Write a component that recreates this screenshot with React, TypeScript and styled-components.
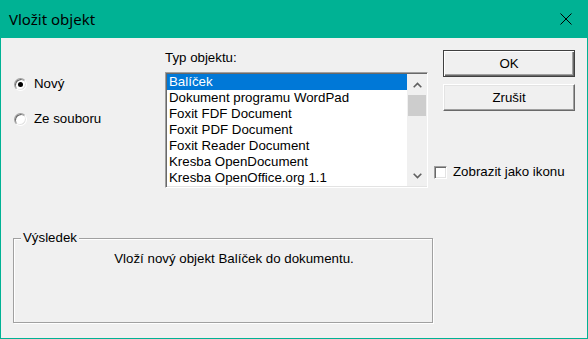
import React from "react";
import styled, { createGlobalStyle } from "styled-components";

const Global = createGlobalStyle`
  html, body { margin: 0; padding: 0; background: #f0f0f0; }
  * { box-sizing: border-box; }
`;

const Window = styled.div`
  width: 588px;
  height: 339px;
  border: 1px solid #00b294;
  border-top: none;
  background: #f0f0f0;
  display: flex;
  flex-direction: column;
  font-family: "Liberation Sans", Arial, sans-serif;
  font-size: 13.3px;
  line-height: 16px;
  color: #000;
`;

const TitleBar = styled.div`
  height: 38px;
  margin: 0 -1px;
  background: #00b294;
  display: flex;
  align-items: center;
  justify-content: space-between;
  padding-left: 9px;
  font-family: "Noto Sans", "Open Sans", sans-serif;
  font-size: 15px;
  color: #000;
`;

const CloseBtn = styled.div`
  width: 45px;
  height: 38px;
  display: flex;
  align-items: center;
  justify-content: center;
`;

const Body = styled.div`
  flex: 1;
  padding: 12px 0 0 12px;
  display: flex;
  flex-direction: column;
`;

const Top = styled.div`
  display: grid;
  grid-template-columns: 152px 263px 147px;
`;

const RadioCol = styled.div`
  padding: 26px 0 0 1px;
  display: flex;
  flex-direction: column;
  gap: 19px;
`;

const OptionRow = styled.label`
  display: flex;
  align-items: center;
  gap: ${(p: { $gap?: number }) => p.$gap ?? 7}px;
  height: 16px;
  white-space: nowrap;
`;

const RadioDot = styled.span<{ $checked?: boolean }>`
  width: 13px;
  height: 13px;
  border-radius: 50%;
  background: #fff;
  border: 1px solid;
  border-color: #a0a0a0 #fff #fff #a0a0a0;
  box-shadow: inset 1px 1px 0 #696969, inset -1px -1px 0 #e3e3e3;
  display: flex;
  align-items: center;
  justify-content: center;
  &::after {
    content: "";
    width: 5px;
    height: 5px;
    border-radius: 50%;
    background: ${(p) => (p.$checked ? "#000" : "transparent")};
  }
`;

const CheckBox = styled.span`
  width: 13px;
  height: 13px;
  background: #fff;
  border: 1px solid;
  border-color: #a0a0a0 #fff #fff #a0a0a0;
  box-shadow: inset 1px 1px 0 #696969, inset -1px -1px 0 #e3e3e3;
`;

const ListCol = styled.div`
  display: flex;
  flex-direction: column;
  gap: 6px;
`;

const ListBox = styled.div`
  height: 116px;
  display: flex;
  border: 1px solid;
  border-color: #a0a0a0 #fff #fff #a0a0a0;
  box-shadow: inset 1px 1px 0 #696969, inset -1px -1px 0 #e3e3e3;
  background: #fff;
  padding: 1px 0 0 1px;
`;

const Items = styled.ul`
  list-style: none;
  margin: 0;
  padding: 0;
  flex: 1;
`;

const Item = styled.li<{ $selected?: boolean }>`
  height: 16px;
  padding-left: 2px;
  white-space: nowrap;
  background: ${(p) => (p.$selected ? "#0078d7" : "transparent")};
  color: ${(p) => (p.$selected ? "#fff" : "#000")};
`;

const ScrollBar = styled.div`
  width: 20px;
  height: 112px;
  background: #f0f0f0;
  display: flex;
  flex-direction: column;
`;

const Arrow = styled.div`
  height: 21px;
  display: flex;
  align-items: center;
  justify-content: center;
`;

const Track = styled.div`
  flex: 1;
  padding: 0 1px;
`;

const Thumb = styled.div`
  height: 21px;
  background: #cdcdcd;
`;

const RightCol = styled.div`
  padding-left: 6px;
  display: flex;
  flex-direction: column;
  align-items: flex-start;
`;

const Button = styled.button<{ $default?: boolean }>`
  align-self: flex-end;
  width: 132px;
  height: 27px;
  margin-bottom: 7px;
  font: inherit;
  color: #000;
  background: #f0f0f0;
  padding: 0;
  border: 1px solid;
  border-color: ${(p) => (p.$default ? "#404040" : "#fff #696969 #696969 #fff")};
  box-shadow: ${(p) =>
    p.$default
      ? "inset 1px 1px 0 #fff, inset -1px -1px 0 #696969, inset -2px -2px 0 #a0a0a0"
      : "inset -1px -1px 0 #a0a0a0, inset 1px 1px 0 #e3e3e3"};
`;

const CheckRow = styled(OptionRow)`
  margin-top: 46px;
`;

const GroupBox = styled.fieldset`
  margin: 42px 0 0 0;
  width: 420px;
  height: 93px;
  padding: 0 0 0 7px;
  border: 1px solid #a0a0a0;
  box-shadow: 1px 1px 0 #fff, inset 1px 1px 0 #fff;
`;

const Legend = styled.legend`
  padding: 0 2px;
  line-height: 16px;
  background: #f0f0f0;
`;

const Description = styled.div`
  margin-top: 5px;
  padding-left: 15px;
  text-align: center;
`;

const items = [
  "Balíček",
  "Dokument programu WordPad",
  "Foxit FDF Document",
  "Foxit PDF Document",
  "Foxit Reader Document",
  "Kresba OpenDocument",
  "Kresba OpenOffice.org 1.1",
];

const Chevron = ({ up }: { up?: boolean }) => (
  <svg width="9" height="6" viewBox="0 0 9 6">
    <polyline
      points={up ? "0.7,5.3 4.5,1.5 8.3,5.3" : "0.7,0.7 4.5,4.5 8.3,0.7"}
      fill="none"
      stroke="#606060"
      strokeWidth="1.6"
    />
  </svg>
);

export default function App() {
  return (
    <>
      <Global />
      <Window>
        <TitleBar>
          <span>Vložit objekt</span>
          <CloseBtn>
            <svg width="12" height="12" viewBox="0 0 12 12">
              <path d="M0.5 0.5 L11.5 11.5 M11.5 0.5 L0.5 11.5" stroke="#000" strokeWidth="1" />
            </svg>
          </CloseBtn>
        </TitleBar>
        <Body>
          <Top>
            <RadioCol>
              <OptionRow>
                <RadioDot $checked />
                Nový
              </OptionRow>
              <OptionRow>
                <RadioDot />
                Ze souboru
              </OptionRow>
            </RadioCol>
            <ListCol>
              <span>Typ objektu:</span>
              <ListBox>
                <Items>
                  {items.map((it, i) => (
                    <Item key={it} $selected={i === 0}>
                      {it}
                    </Item>
                  ))}
                </Items>
                <ScrollBar>
                  <Arrow>
                    <Chevron up />
                  </Arrow>
                  <Track>
                    <Thumb />
                  </Track>
                  <Arrow>
                    <Chevron />
                  </Arrow>
                </ScrollBar>
              </ListBox>
            </ListCol>
            <RightCol>
              <Button $default>OK</Button>
              <Button>Zrušit</Button>
              <CheckRow $gap={6}>
                <CheckBox />
                Zobrazit jako ikonu
              </CheckRow>
            </RightCol>
          </Top>
          <GroupBox>
            <Legend>Výsledek</Legend>
            <Description>Vloží nový objekt Balíček do dokumentu.</Description>
          </GroupBox>
        </Body>
      </Window>
    </>
  );
}
